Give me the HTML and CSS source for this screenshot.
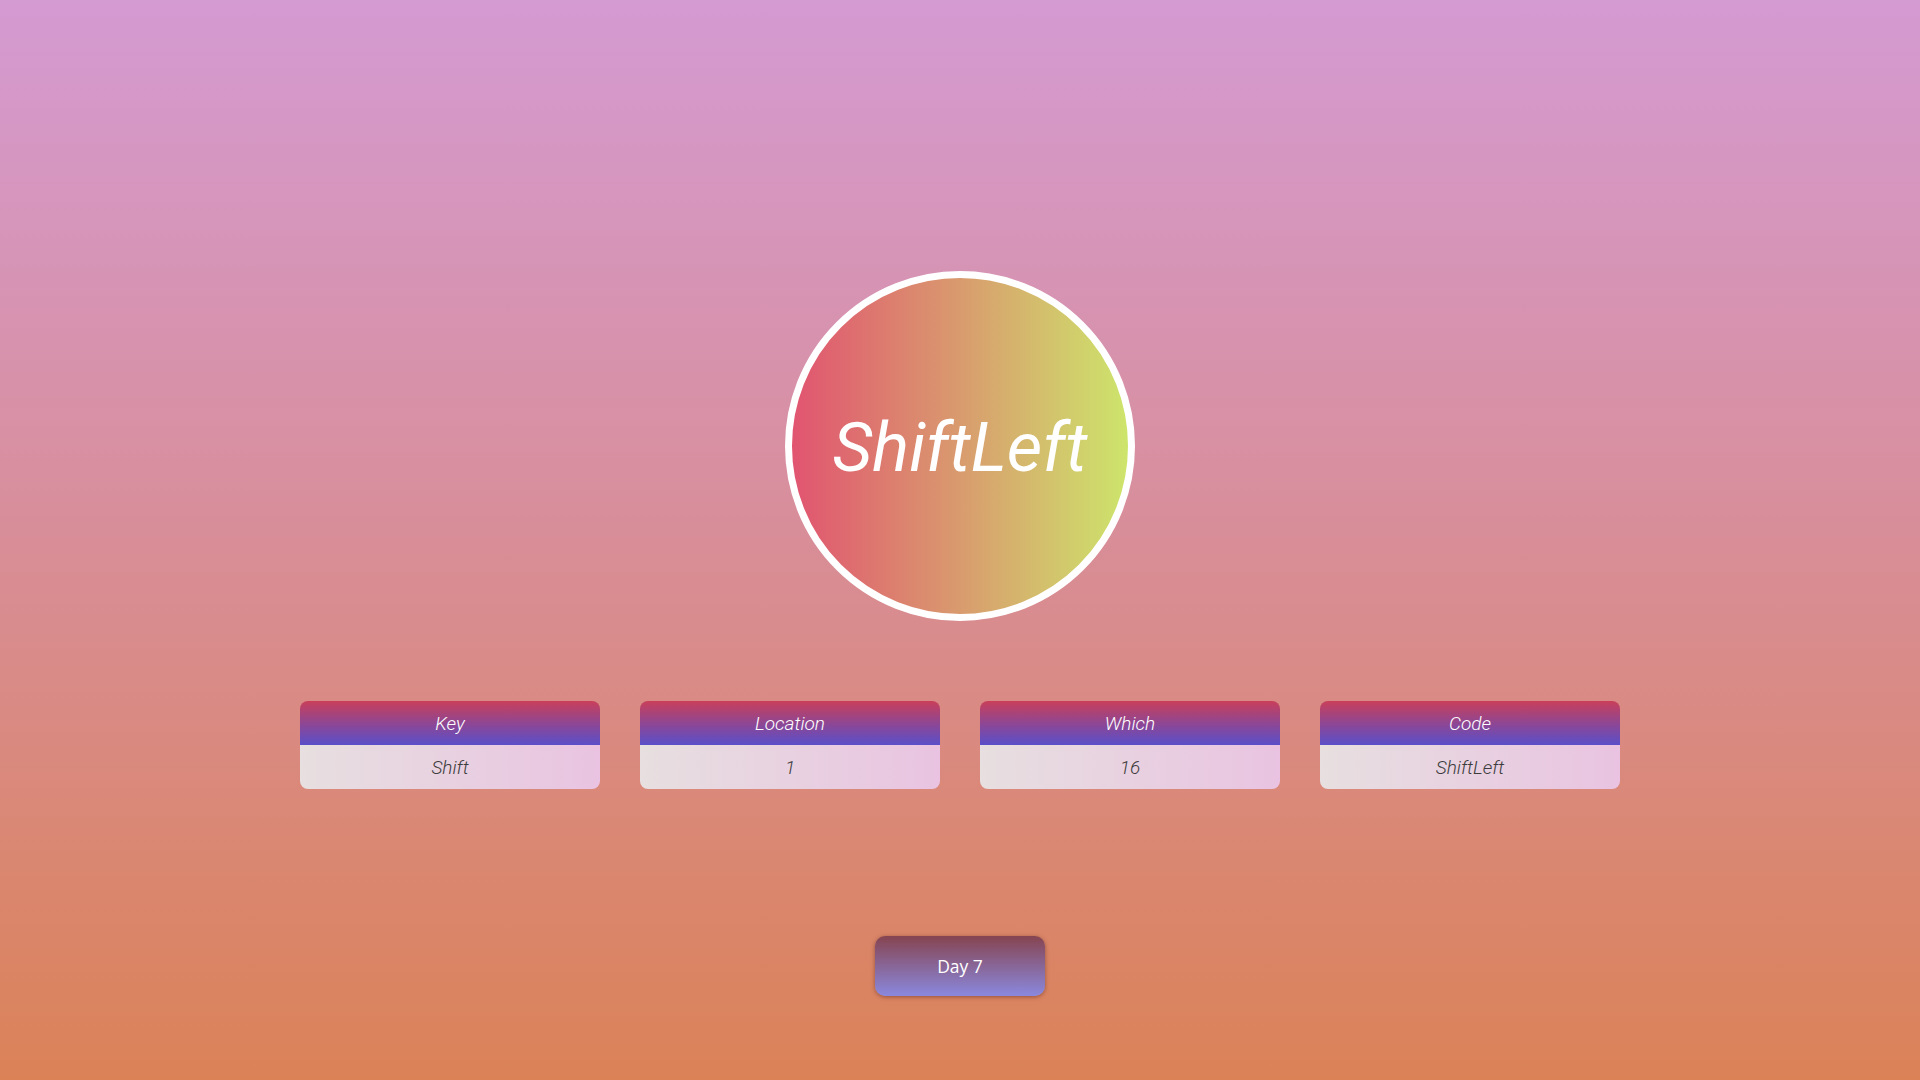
FILE: index.html
```html
<!DOCTYPE html>
<html lang="en">
<head>
<meta charset="utf-8">
<title>Key Codes</title>
<link rel="stylesheet" href="styles.css">
</head>
<body>
<main class="page">
  <div class="key-circle"><span class="key-name">ShiftLeft</span></div>
  <section class="cards">
    <div class="card"><div class="card-head">Key</div><div class="card-body">Shift</div></div>
    <div class="card"><div class="card-head">Location</div><div class="card-body">1</div></div>
    <div class="card"><div class="card-head">Which</div><div class="card-body">16</div></div>
    <div class="card"><div class="card-head">Code</div><div class="card-body">ShiftLeft</div></div>
  </section>
  <button class="day-btn">Day 7</button>
</main>
</body>
</html>
```
FILE: styles.css
```css
* { box-sizing: border-box; }
html, body { margin: 0; height: 100%; }
body {
  background: linear-gradient(to bottom, #d49ad2 0%, #d88f9e 45%, #db8257 100%);
  font-family: Roboto, "Noto Sans", sans-serif;
  overflow: hidden;
}
.page {
  height: 1080px;
  display: flex;
  flex-direction: column;
  align-items: center;
  padding-top: 271px;
}
.key-circle {
  width: 350px;
  height: 350px;
  border-radius: 50%;
  border: 7px solid #fff;
  background: linear-gradient(to right, #e15470 0%, #d99b6e 50%, #cde56b 100%);
  display: flex;
  align-items: center;
  justify-content: center;
}
.key-name {
  color: #fff;
  font-style: italic;
  font-size: 69px;
  line-height: 1;
  margin-top: 2px;
}
.cards {
  margin-top: 80px;
  display: flex;
  gap: 40px;
}
.card {
  width: 300px;
  border-radius: 8px;
  overflow: hidden;
}
.card-head {
  height: 44px;
  background: linear-gradient(to bottom, #c93f5a 0%, #8a4798 55%, #5a4fc8 100%);
  color: #fff;
  font-style: italic;
  font-weight: 300;
  font-size: 19px;
  display: flex;
  align-items: center;
  justify-content: center;
}
.card-body {
  height: 44px;
  background: linear-gradient(to right, #e7dfe0 0%, #e9c3e1 100%);
  color: #3c3c3c;
  font-style: italic;
  font-weight: 300;
  font-size: 19px;
  display: flex;
  align-items: center;
  justify-content: center;
}
.day-btn {
  margin-top: 147px;
  width: 170px;
  height: 60px;
  border: none;
  border-radius: 10px;
  background: linear-gradient(to bottom, #864450 0%, #8a88de 100%);
  box-shadow: 0 1px 4px rgba(90, 40, 30, 0.55);
  color: #fff;
  font-family: "Open Sans", Lato, sans-serif;
  font-size: 17.5px;
  font-weight: 400;
}
```
